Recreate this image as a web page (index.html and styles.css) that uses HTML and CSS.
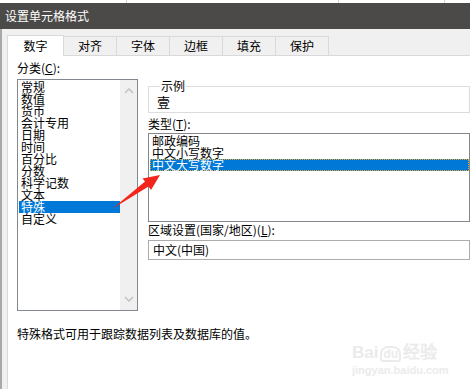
FILE: index.html
```html
<!DOCTYPE html>
<html lang="zh-CN">
<head>
  <meta charset="UTF-8">
  <title>设置单元格格式</title>
  <link rel="stylesheet" href="styles.css">
</head>
<body>
  <div class="top-strip">
    <span class="strip-a"></span>
    <span class="strip-b"></span>
    <span class="strip-c"></span>
  </div>
  <div class="title-bar">设置单元格格式</div>

  <div class="dialog">
    <ul class="tabs">
      <li class="tab active">数字</li>
      <li class="tab">对齐</li>
      <li class="tab">字体</li>
      <li class="tab">边框</li>
      <li class="tab">填充</li>
      <li class="tab">保护</li>
    </ul>

    <div class="panel">
      <div class="columns">
        <div class="left-col">
          <div class="label">分类(<u>C</u>):</div>
          <div class="listbox category">
            <ul class="items">
              <li>常规</li>
              <li>数值</li>
              <li>货币</li>
              <li>会计专用</li>
              <li>日期</li>
              <li>时间</li>
              <li>百分比</li>
              <li>分数</li>
              <li>科学记数</li>
              <li>文本</li>
              <li class="selected">特殊</li>
              <li>自定义</li>
            </ul>
            <div class="scrollbar">
              <svg width="10" height="6" viewBox="0 0 10 6"><path d="M1 5 L5 1 L9 5" fill="none" stroke="#c4c4c4" stroke-width="1.6"/></svg>
              <svg width="10" height="6" viewBox="0 0 10 6"><path d="M1 1 L5 5 L9 1" fill="none" stroke="#c4c4c4" stroke-width="1.6"/></svg>
            </div>
          </div>
        </div>

        <div class="right-col">
          <fieldset class="sample">
            <legend>示例</legend>
            <div class="sample-value">壹</div>
          </fieldset>

          <div class="label type-label">类型(<u>T</u>):</div>
          <ul class="listbox types">
            <li>邮政编码</li>
            <li>中文小写数字</li>
            <li class="selected focus">中文大写数字</li>
          </ul>

          <div class="label">区域设置(国家/地区)(<u>L</u>):</div>
          <div class="dropdown">中文(中国)</div>
        </div>
      </div>

      <p class="hint">特殊格式可用于跟踪数据列表及数据库的值。</p>
    </div>
  </div>

  <svg class="arrow" width="470" height="389" viewBox="0 0 470 389">
    <polygon points="112,209 145,181.5 142.5,178.5 160,175 151,190 148.5,186.5" fill="#f3261c"/>
  </svg>

  <div class="watermark">
    <div class="wm-logo">Bai<span class="wm-du">du</span>经验</div>
    <div class="wm-url">jingyan.baidu.com</div>
  </div>
</body>
</html>
```

FILE: styles.css
```css
body {
  margin: 0;
  width: 470px;
  height: 389px;
  overflow: hidden;
  position: relative;
  background-color: #f0f0f0;
  font-family: "Noto Sans CJK SC", "Liberation Sans", sans-serif;
  font-size: 12px;
  color: #000;
}

ul {
  list-style: none;
  margin: 0;
  padding: 0;
}

.top-strip {
  display: flex;
  height: 3px;
  background-color: #fff;
}

.top-strip span {
  border-right: 1px solid #d4d4d4;
}

.strip-a { width: 126px; }
.strip-b { width: 211px; }
.strip-c { width: 105px; }

.title-bar {
  height: 26px;
  line-height: 26px;
  padding-left: 5px;
  background-color: #4b4a48;
  color: #fff;
  font-size: 12px;
}

.dialog {
  border-left: 2px solid #a8a8a8;
  padding-top: 6px;
  height: 354px;
}

.tabs {
  display: flex;
  align-items: flex-end;
  margin-left: 5px;
  height: 20px;
}

.tab {
  width: 52px;
  height: 18px;
  line-height: 18px;
  text-align: center;
  border: 1px solid #d9d9d9;
  border-bottom: none;
  border-left: none;
  background-color: #f0f0f0;
}

.tab.active {
  width: 55px;
  height: 20px;
  line-height: 20px;
  border-left: 1px solid #d9d9d9;
  background-color: #fff;
  position: relative;
  top: 1px;
}

.panel {
  margin-left: 5px;
  border-top: 1px solid #d9d9d9;
  border-left: 1px solid #d9d9d9;
  background-color: #fff;
  padding: 4px 0 0 9px;
  height: 329px;
}

.columns {
  display: flex;
  gap: 10px;
}

.label {
  height: 16px;
  line-height: 16px;
  white-space: nowrap;
}

.listbox {
  border: 1px solid #828790;
  background-color: #fff;
}

.listbox li {
  height: 12px;
  line-height: 12px;
  padding-left: 2px;
  white-space: nowrap;
}

.listbox li.selected {
  background-color: #0078d7;
  color: #fff;
}

.category {
  margin-top: 3px;
  width: 119px;
  height: 230px;
  display: flex;
}

.category .items {
  flex: 1;
  padding: 1px 0 0 1px;
}

.scrollbar {
  width: 17px;
  background-color: #f0f0f0;
  display: flex;
  flex-direction: column;
  justify-content: space-between;
  align-items: center;
  padding: 8px 0 8px 0;
}

.right-col {
  width: 340px;
}

.sample {
  margin: 20px 0 0 0;
  padding: 2px 8px 2px 8px;
  border: 1px solid #dcdcdc;
  min-width: 0;
}

.sample legend {
  padding: 0 1px;
  margin-left: 3px;
  line-height: 12px;
}

.sample-value {
  height: 16px;
  line-height: 16px;
  font-size: 13px;
}

.type-label {
  margin-top: 3px;
}

.types {
  margin-top: 1px;
  height: 86px;
  padding: 1px 0 0 1px;
}

.types li.focus {
  border: 1px dotted #f5a623;
  line-height: 10px;
  height: 10px;
  padding-left: 1px;
}

.dropdown {
  margin-top: 2px;
  height: 18px;
  line-height: 18px;
  border: 1px solid #acacac;
  padding-left: 4px;
}

.hint {
  margin: 15px 0 0 0;
  line-height: 16px;
}

.arrow {
  position: absolute;
  left: 0;
  top: 0;
}

.watermark {
  position: absolute;
  left: 352px;
  top: 343px;
  color: #ebebeb;
  font-family: "Liberation Sans", sans-serif;
}

.wm-logo {
  font-size: 17px;
  font-weight: bold;
  line-height: 20px;
}

.wm-du {
  display: inline-block;
  border: 2px solid #ebebeb;
  border-radius: 8px 8px 3px 3px;
  font-size: 12px;
  line-height: 12px;
  padding: 0 1px;
  margin: 0 2px;
}

.wm-url {
  font-size: 11px;
  line-height: 14px;
  font-weight: bold;
}
```
